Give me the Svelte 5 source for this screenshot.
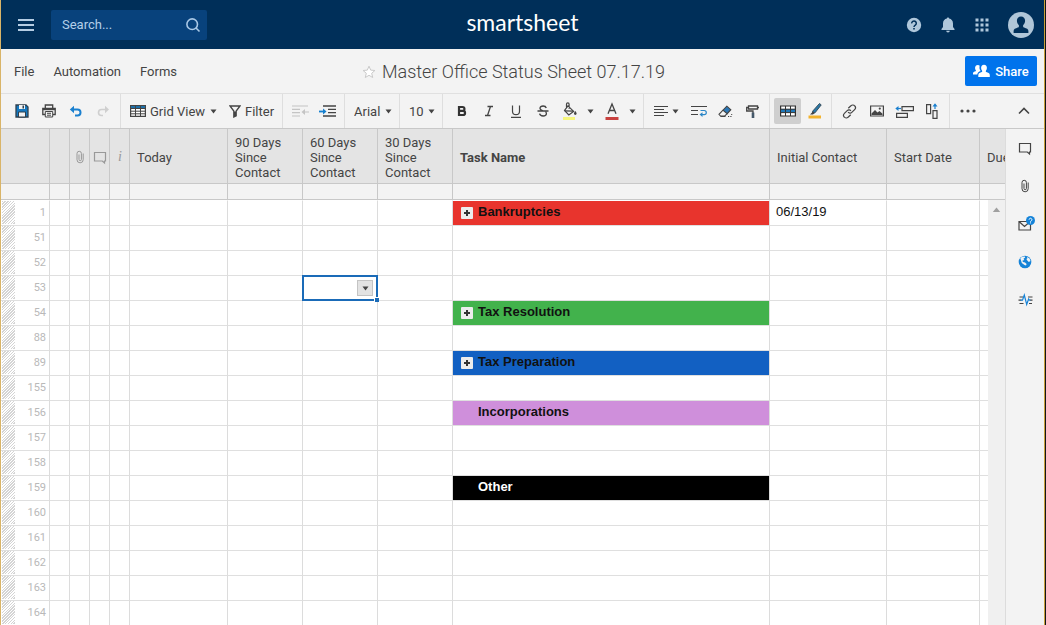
<script lang="ts">
  const numbers = [1, 51, 52, 53, 54, 88, 89, 155, 156, 157, 158, 159, 160, 161, 162, 163, 164];

  const tasks: Record<number, { name: string; tone: string; expandable?: boolean }> = {
    1: { name: 'Bankruptcies', tone: 'red', expandable: true },
    54: { name: 'Tax Resolution', tone: 'green', expandable: true },
    89: { name: 'Tax Preparation', tone: 'blue', expandable: true },
    156: { name: 'Incorporations', tone: 'violet' },
    159: { name: 'Other', tone: 'black' }
  };

  const contacts: Record<number, string> = { 1: '06/13/19' };
  const selectedRow = 53;

  let query = $state('');
</script>

{#snippet clip()}
  <svg width="16" height="16" viewBox="0 0 16 16" fill="none" stroke="currentColor" stroke-width="1">
    <path d="M11.200 4.500v6.200a3.100 3.100 0 0 1-6.200 0V4.500a2.200 2.200 0 0 1 4.400 0v6a1.200 1.200 0 0 1-2.400 0V5.500" />
  </svg>
{/snippet}

{#snippet bubble()}
  <svg width="16" height="16" viewBox="0 0 16 16" fill="none" stroke="currentColor" stroke-width="1.2">
    <path d="M2.500 3.500h11v8.500h-1v2l-2.200-2H2.500z" />
  </svg>
{/snippet}

{#snippet caret()}
  <svg width="7" height="5" viewBox="0 0 7 5"><path d="M.5.5h6l-3 4z" fill="#444" /></svg>
{/snippet}

<div class="app">
  <header class="top">
    <div class="top-left">
      <button class="plain" aria-label="Menu">
        <svg width="16" height="14" viewBox="0 0 16 14" fill="none" stroke="#b5cde3" stroke-width="2">
          <path d="M0 2h16M0 7h16M0 12h16" />
        </svg>
      </button>
      <form class="search" role="search" onsubmit={(e) => e.preventDefault()}>
        <input type="text" placeholder="Search..." aria-label="Search" bind:value={query} />
        <button class="plain" aria-label="Run search">
          <svg width="16" height="16" viewBox="0 0 16 16" fill="none" stroke="#a9c8e6" stroke-width="1.6">
            <circle cx="7.200" cy="7.200" r="5.300" /><path d="M11 11l3.500 3.500" />
          </svg>
        </button>
      </form>
    </div>
    <div class="logo">smartsheet</div>
    <div class="top-right">
      <button class="plain" aria-label="Help">
        <svg width="16" height="16" viewBox="0 0 16 16" fill="none">
          <circle cx="8" cy="8" r="7.200" fill="#afc7db" />
          <path d="M5.700 6.400a2.300 2.300 0 1 1 3.600 1.800c-.9.600-1.300.9-1.300 1.800" stroke="#002f59" stroke-width="1.500" />
          <path d="M7.200 11h1.600v1.600H7.200z" fill="#002f59" />
        </svg>
      </button>
      <button class="plain" aria-label="Notifications">
        <svg width="16" height="16" viewBox="0 0 16 16" fill="#afc7db">
          <path d="M8 .5c.7 0 1.100.5 1.100 1.100C11.500 2.100 13 4 13 6.400v3.500l1.500 2.100v1h-13v-1L3 9.900V6.400C3 4 4.500 2.100 6.900 1.600 6.900 1 7.300.5 8 .5zM6.200 13.800h3.600a1.800 1.800 0 0 1-3.600 0z" />
        </svg>
      </button>
      <button class="plain" aria-label="Apps">
        <svg width="14" height="14" viewBox="0 0 14 14" fill="#afc7db">
          <path d="M.5.5h3v3h-3zM5.500.5h3v3h-3zM10.500.5h3v3h-3zM.5 5.500h3v3h-3zM5.500 5.500h3v3h-3zM10.500 5.500h3v3h-3zM.5 10.500h3v3h-3zM5.500 10.500h3v3h-3zM10.500 10.500h3v3h-3z" />
        </svg>
      </button>
      <button class="plain avatar" aria-label="Account">
        <svg width="26" height="26" viewBox="0 0 26 26">
          <circle cx="13" cy="13" r="13" fill="#b0c6d8" />
          <path d="M13 4.500c2.500 0 4.100 1.800 4.100 4.300 0 1.800-.8 3.500-2 4.400v1.200c0 .6.4.9 1 1.100 2.500.8 4.300 1.700 4.300 3.500v2H5.600v-2c0-1.800 1.800-2.700 4.300-3.500.6-.2 1-.5 1-1.100v-1.200c-1.200-.9-2-2.600-2-4.400 0-2.500 1.600-4.300 4.100-4.300z" fill="#002f59" />
        </svg>
      </button>
    </div>
  </header>

  <div class="menubar">
    <nav>
      <button class="plain">File</button>
      <button class="plain">Automation</button>
      <button class="plain">Forms</button>
    </nav>
    <div class="title">
      <button class="plain" aria-label="Favorite">
        <svg width="14" height="14" viewBox="0 0 14 14" fill="#fff" stroke="#c9c9c9">
          <path d="M7 1.200l1.700 3.900 4.200.4-3.200 2.800 1 4.200L7 10.300l-3.700 2.200 1-4.200L1.100 5.500l4.200-.4z" />
        </svg>
      </button>
      <h1>Master Office Status Sheet 07.17.19</h1>
    </div>
    <div class="share-wrap">
      <button class="share">
        <svg width="17" height="14" viewBox="0 0 17 14" fill="#fff">
          <path d="M4.800 1c.9 0 1.500.3 1.900.8-.5 1.700-.3 3.700.9 5.200-1.700.8-3.100 1.500-3.300 3.500H0V9.300c0-1.200 1.300-1.600 2.600-2.100.4-.2.5-.6.200-1C1.500 4.300 1.900 1 4.800 1z" />
          <path d="M11 .8c2 0 3 1.500 2.900 3.300 0 1.100-.4 2-1 2.700-.3.500-.2 1 .3 1.200 1.800.7 3.600 1.200 3.600 3v2H5.300v-2c0-1.800 1.800-2.300 3.500-3 .5-.2.6-.7.300-1.200-.6-.7-1-1.600-1-2.700C8.100 2.300 9 .8 11 .8z" />
        </svg>
        Share
      </button>
    </div>
  </div>

  <div class="toolbar" role="toolbar" aria-label="Sheet tools">
    <div class="group first">
      <button class="tool" aria-label="Save">
        <svg width="14" height="14" viewBox="0 0 14 14">
          <path d="M1 1h10l2 2v10H1z" fill="#1478c0" stroke="#2f3f4c" stroke-width="1.300" />
          <path d="M4 1h6v4H4z" fill="#f3f3f3" /><path d="M7.500 1.500h1.500v3H7.500z" fill="#2f3f4c" />
          <path d="M3.500 8h7v5h-7z" fill="#f3f3f3" stroke="#2f3f4c" />
        </svg>
      </button>
      <button class="tool" aria-label="Print">
        <svg width="14" height="14" viewBox="0 0 14 14" fill="none" stroke="#444" stroke-width="1.300">
          <path d="M3.300 4V1h7.400v3M3 10.500H.8V4.500h12.400v6H11" /><path d="M.8 5.200h12.400" stroke-width="2" />
          <path d="M3.300 7.500h7.400V13H3.300zM5 9.300h4M5 11.200h4" stroke-width="1" />
        </svg>
      </button>
      <button class="tool" aria-label="Undo">
        <svg width="14" height="12" viewBox="0 0 14 12" fill="none" stroke="#1b80cf" stroke-width="2">
          <path d="M3.500 4.500h5a3 3 0 0 1 0 6H6" /><path d="M5 .8v7.400L.8 4.500z" fill="#1b80cf" stroke="none" />
        </svg>
      </button>
      <button class="tool" aria-label="Redo" disabled>
        <svg width="14" height="12" viewBox="0 0 14 12" fill="none" stroke="#cfcfcf" stroke-width="1.600">
          <path d="M11 4.500H5.500a3 3 0 0 0 0 6H7" /><path d="M9 .8v7.400l4-3.700z" fill="#cfcfcf" stroke="none" />
        </svg>
      </button>
    </div>

    <div class="group views">
      <label class="pick">
        <svg width="16" height="12" viewBox="0 0 16 12">
          <path d="M.6.6h14.800v10.800H.6z" fill="#fff" stroke="#444" stroke-width="1.200" />
          <path d="M1 1h14v2H1z" fill="#1d6fa8" />
          <path d="M0 3.500h16M0 6.200h16M0 8.800h16M5.500 0v12M10.500 0v12" stroke="#444" fill="none" />
        </svg>
        <select aria-label="View"><option>Grid View</option></select>
      </label>
      <button class="filter">
        <svg width="12" height="13" viewBox="0 0 12 13" fill="none" stroke="#444" stroke-width="1.300">
          <path d="M1 1h10L7.200 6v4.800L4.800 12V6z" /><path d="M6 6.500v4.500" stroke-width="2" />
        </svg>
        Filter
      </button>
    </div>

    <div class="group">
      <button class="tool" aria-label="Outdent" disabled>
        <svg width="17" height="12" viewBox="0 0 17 12" fill="none" stroke="#c4c4c4" stroke-width="1.200">
          <path d="M0 1h16M0 4.300h8M0 7.700h8M0 11h8M11 7h6" /><path d="M13 4v6L9.500 7z" fill="#c4c4c4" stroke="none" />
        </svg>
      </button>
      <button class="tool" aria-label="Indent">
        <svg width="17" height="12" viewBox="0 0 17 12" fill="none" stroke="#444" stroke-width="1.300">
          <path d="M4 1h13M9 4.300h8M9 7.700h8M4 11h13" /><path d="M0 6.500h5" stroke="#1580d0" stroke-width="1.800" />
          <path d="M4 3.500v6l3.500-3z" fill="#1580d0" stroke="none" />
        </svg>
      </button>
    </div>

    <div class="group font">
      <select aria-label="Font"><option>Arial</option></select>
    </div>
    <div class="group font">
      <select aria-label="Font size"><option>10</option></select>
    </div>

    <div class="group styles">
      <button class="tool" aria-label="Bold">
        <svg width="12" height="12" viewBox="0 0 12 12" fill="none" stroke="#333" stroke-width="2.200">
          <path d="M3 2h3.500a1.900 1.900 0 0 1 0 3.900H3zM3 5.900h4a2 2 0 0 1 0 4.100H3z" />
        </svg>
      </button>
      <button class="tool" aria-label="Italic">
        <svg width="12" height="12" viewBox="0 0 12 12" fill="none" stroke="#444" stroke-width="1.300">
          <path d="M4.500 1.500H10M2 10.500h5.500M7.500 1.500l-3 9" />
        </svg>
      </button>
      <button class="tool" aria-label="Underline">
        <svg width="12" height="13" viewBox="0 0 12 13" fill="none" stroke="#444" stroke-width="1.200">
          <path d="M2.500.5v5.700a3.500 3.500 0 0 0 7 0V.5M1 12.300h10" />
        </svg>
      </button>
      <button class="tool" aria-label="Strikethrough">
        <svg width="12" height="12" viewBox="0 0 12 12" fill="none" stroke="#444" stroke-width="1.300">
          <path d="M9.300 3C8.900 1.700 7.700 1 6.100 1 4.200 1 3 1.900 3 3.300 3 4.800 4.300 5.300 6 5.800M2.600 8.700C2.900 10.200 4.200 11 6.100 11c2 0 3.300-.9 3.300-2.500 0-.8-.3-1.400-.9-1.800M.5 6h11" />
        </svg>
      </button>
      <button class="tool" aria-label="Fill color">
        <svg width="14" height="18" viewBox="0 0 14 18" fill="none" stroke="#444" stroke-width="1.200">
          <path d="M0 15h12v3H0z" fill="#f6f67c" stroke="none" />
          <path d="M5 3.800l5.600 5.600-4.800 3.600L1.500 8.500zM3.500 6.500V2.200a1.300 1.300 0 0 1 2.600 0v4.500" />
          <path d="M1.800 8.800l8.400.4" /><path d="M12.300 9c.9 1.300 1.300 2 1.300 2.600a1.300 1.300 0 0 1-2.600 0c0-.6.400-1.300 1.300-2.600z" fill="#444" stroke="none" />
        </svg>
      </button>
      <button class="drop" aria-label="Choose fill color">{@render caret()}</button>
      <button class="tool" aria-label="Text color">
        <svg width="14" height="18" viewBox="0 0 14 18" fill="none" stroke="#444" stroke-width="1.300">
          <path d="M3 11.800L7 2l4 9.800M4.300 8.500h5.400" /><path d="M.5 15h13v3H.5z" fill="#c8413f" stroke="none" />
        </svg>
      </button>
      <button class="drop" aria-label="Choose text color">{@render caret()}</button>
    </div>

    <div class="group">
      <button class="align" aria-label="Alignment">
        <svg width="14" height="12" viewBox="0 0 14 12" stroke="#444" stroke-width="1.200">
          <path d="M0 1.500h14M0 4.500h10M0 7.500h14M0 10.500h10" />
        </svg>
        {@render caret()}
      </button>
      <button class="tool" aria-label="Wrap text">
        <svg width="16" height="12" viewBox="0 0 16 12" fill="none" stroke="#444" stroke-width="1.200">
          <path d="M0 1.500h16M0 5.500h7M0 9.500h7" />
          <path d="M9.500 5.500h3.700a2 2 0 0 1 0 4.200H10" stroke="#2a86c7" /><path d="M11.500 7.200v4.800L8.500 9.600z" fill="#2a86c7" stroke="none" />
        </svg>
      </button>
      <button class="tool" aria-label="Clear format">
        <svg width="15" height="13" viewBox="0 0 15 13" fill="none" stroke="#444" stroke-width="1.100">
          <path d="M8.800 1.200l4 3.500-3.600 4-4.200-3.500z" fill="#2a78b8" /><path d="M5 5.200L1 9.300 2.500 11h4.300l2.400-2.300" />
          <path d="M2.500 11.500h5M10 11.500h1.200M12.300 11.500h1.200M13.200 9.500h1" />
        </svg>
      </button>
      <button class="tool" aria-label="Format painter">
        <svg width="14" height="13" viewBox="0 0 14 13" fill="none" stroke="#444" stroke-width="1.300">
          <path d="M2.500 1h9v3h-9zM2.500 2.500H.7V6H7v2M11.500 2.500H13" /><path d="M5.700 7.500h2.600V13H5.700z" fill="#44586a" stroke="none" />
        </svg>
      </button>
    </div>

    <div class="group">
      <button class="tool pressed" aria-label="Conditional formatting" aria-pressed="true">
        <svg width="16" height="12" viewBox="0 0 16 12" fill="none">
          <path d="M.6 1h14.800v10H.6z" fill="#fff" stroke="#333" stroke-width="1.200" />
          <path d="M1 4h14v3.500H1z" fill="#2078b8" />
          <path d="M0 4.200h16M0 7.600h16M5.500 1v10M10.500 1v10" stroke="#333" />
        </svg>
      </button>
      <button class="tool" aria-label="Highlight changes">
        <svg width="14" height="16" viewBox="0 0 14 16">
          <path d="M.5 12.500h12.500v3H.5z" fill="#f3b32d" />
          <path d="M11.500.5l1.700 1.400L7 9.800 4.400 10.300 4.800 8z" fill="#2a78a8" stroke="#38505f" /><path d="M5 8.500L2 11.500h3l1.700-1.700z" fill="#444" />
        </svg>
      </button>
    </div>

    <div class="group">
      <button class="tool" aria-label="Link">
        <svg width="15" height="15" viewBox="0 0 15 15" fill="none" stroke="#444" stroke-width="1.200">
          <path d="M6.300 4.300l2.600-2.500a2.600 2.600 0 0 1 3.900.2 2.600 2.600 0 0 1-.2 3.600L9.800 8.400a2.500 2.500 0 0 1-3.700-.2" />
          <path d="M8.700 10.700l-2.600 2.500a2.600 2.600 0 0 1-3.900-.2 2.600 2.600 0 0 1 .2-3.600l2.800-2.800a2.500 2.500 0 0 1 3.700.2" />
        </svg>
      </button>
      <button class="tool" aria-label="Image">
        <svg width="14" height="12" viewBox="0 0 14 12">
          <path d="M.6 1h12.800v10H.6z" fill="none" stroke="#444" stroke-width="1.200" />
          <path d="M1.500 10V8.500L5 5l2.500 2.500L9.500 6l3 2.700V10z" fill="#444" /><circle cx="9.800" cy="3.600" r="1.100" fill="#444" />
        </svg>
      </button>
      <button class="tool wide" aria-label="Insert row">
        <svg width="19" height="13" viewBox="0 0 19 13" fill="none" stroke="#444" stroke-width="1.200">
          <path d="M7 1.600h11.400v4H7zM1.600 8.400h10.800v4H1.600z" />
          <path d="M1.500 3.500H6" stroke="#1b80cf" /><path d="M3.500 1v5L.3 3.500z" fill="#1b80cf" stroke="none" />
        </svg>
      </button>
      <button class="tool wide" aria-label="Insert column">
        <svg width="12" height="16" viewBox="0 0 12 16" fill="none" stroke="#444" stroke-width="1.200">
          <path d="M.6 1.600h4v9h-4zM7 7.600h4v7.800H7z" />
          <path d="M9 1.500V6" stroke="#1b80cf" /><path d="M6.500 3.500h5L9 .3z" fill="#1b80cf" stroke="none" />
        </svg>
      </button>
    </div>

    <div class="group last">
      <button class="tool" aria-label="More">
        <svg width="16" height="4" viewBox="0 0 16 4" fill="#444"><circle cx="2" cy="2" r="1.600" /><circle cx="8" cy="2" r="1.600" /><circle cx="14" cy="2" r="1.600" /></svg>
      </button>
      <button class="tool" aria-label="Collapse toolbar">
        <svg width="12" height="8" viewBox="0 0 12 8" fill="none" stroke="#444" stroke-width="1.600"><path d="M1 6.500l5-5 5 5" /></svg>
      </button>
    </div>
  </div>

  <main>
    <div class="sheet">
      <table>
        <colgroup>
          <col class="c-num" /><col class="c-tiny" /><col class="c-tiny" /><col class="c-tiny" /><col class="c-tiny" />
          <col class="c-today" /><col class="c-days" /><col class="c-days" /><col class="c-days" />
          <col class="c-task" /><col class="c-contact" /><col class="c-start" /><col />
        </colgroup>
        <thead>
          <tr class="names">
            <th></th>
            <th></th>
            <th class="glyph" aria-label="Attachments">{@render clip()}</th>
            <th class="glyph" aria-label="Comments">{@render bubble()}</th>
            <th class="glyph info">i</th>
            <th>Today</th>
            <th>90 Days Since Contact</th>
            <th>60 Days Since Contact</th>
            <th>30 Days Since Contact</th>
            <th class="primary">Task Name</th>
            <th>Initial Contact</th>
            <th>Start Date</th>
            <th class="cut">Due</th>
          </tr>
          <tr class="band">
            {#each Array(13) as _}<td></td>{/each}
          </tr>
        </thead>
        <tbody>
          {#each numbers as n}
            <tr>
              <th class="num" scope="row"><span class="grip"></span>{n}</th>
              <td></td><td></td><td></td><td></td><td></td><td></td>
              <td class="cell">
                {#if n === selectedRow}
                  <div class="selected">
                    <button aria-label="Open list">{@render caret()}</button>
                    <span class="handle"></span>
                  </div>
                {/if}
              </td>
              <td></td>
              {#if tasks[n]}
                <td class="task {tasks[n].tone}">
                  <div>
                    {#if tasks[n].expandable}
                      <button class="plus" aria-label="Expand {tasks[n].name}">
                        <svg width="12" height="12" viewBox="0 0 12 12"><path d="M3 6h6M6 3v6" stroke="#333" stroke-width="2" /></svg>
                      </button>
                    {:else}
                      <span class="no-plus"></span>
                    {/if}
                    {tasks[n].name}
                  </div>
                </td>
              {:else}
                <td></td>
              {/if}
              <td class="value">{contacts[n] ?? ''}</td>
              <td></td><td></td>
            </tr>
          {/each}
        </tbody>
      </table>
      <div class="scrollbar">
        <svg width="9" height="5" viewBox="0 0 9 5"><path d="M.8 5L4.500.5 8.200 5z" fill="#a0a0a0" /></svg>
      </div>
    </div>

    <aside>
      <button class="plain" aria-label="Conversations">{@render bubble()}</button>
      <button class="plain" aria-label="Attachments">{@render clip()}</button>
      <button class="plain" aria-label="Update requests">
        <svg width="20" height="16" viewBox="0 0 20 16" fill="none" stroke="#444" stroke-width="1.200">
          <path d="M4 5.500h11.500v8.500H4zM4 5.500l5.500 5 4-3.500" />
          <circle cx="15.500" cy="4.500" r="4.500" fill="#1583d8" stroke="none" />
          <path d="M14.100 3.700a1.400 1.400 0 1 1 2.200 1.100c-.6.400-.8.600-.8 1.100M15.500 6.400v1" stroke="#fff" stroke-width="1" />
        </svg>
      </button>
      <button class="plain" aria-label="Publish">
        <svg width="14" height="14" viewBox="0 0 14 14">
          <circle cx="7" cy="7" r="6.300" fill="#1583d8" />
          <path d="M2.300 3.200L4 1.800l2.800-.4.4 1.200-1.700 1.200.8 1.300-2 .6.700 1.400 2 .3 1.600 1.600-.6 1.400-1.500-.3L3.800 8zM8.800 1.800l2.800 1.800.9 2.500-1.700.9-1.500-1.400-.9-1.600 1.100-.8z" fill="#f3f3f3" />
        </svg>
      </button>
      <button class="plain" aria-label="Activity log">
        <svg width="15" height="14" viewBox="0 0 15 14" fill="none" stroke="#444" stroke-width="1.200">
          <path d="M1.500 4h3.500M10 4h4.500M.500 7.200h3M12 7.200h2.500M1.500 10.500h4M11 10.500h3" />
          <path d="M2.500 7.200h2L6.300 2l2.400 9.500L10.600 6l.8 1.200h1" stroke="#1583d8" />
        </svg>
      </button>
    </aside>
  </main>
</div>

<style>
  :global(body) {
    margin: 0;
    background: #151515;
  }
  .app {
    box-sizing: border-box;
    height: 100vh;
    margin-right: 1px;
    border-left: 1px solid #d9b468;
    border-right: 1px solid #c9a03c;
    display: flex;
    flex-direction: column;
    overflow: hidden;
    background: #f3f3f3;
    color: #444;
    font: 13px/15px Roboto, sans-serif;
  }
  button,
  select,
  input {
    margin: 0;
    padding: 0;
    border: 0;
    background: none;
    color: inherit;
    font: inherit;
  }
  button {
    display: flex;
    align-items: center;
    justify-content: center;
  }
  svg {
    display: block;
    flex: none;
  }

  .top {
    display: grid;
    grid-template-columns: 1fr auto 1fr;
    align-items: center;
    height: 49px;
    flex: none;
    background: #002f59;
  }
  .top-left {
    display: flex;
    align-items: center;
    gap: 17px;
    padding-left: 17px;
  }
  .search {
    display: flex;
    align-items: center;
    box-sizing: border-box;
    width: 156px;
    height: 30px;
    padding: 0 6px 0 11px;
    background: #08427c;
    border-radius: 2px;
  }
  .search input {
    flex: 1;
    min-width: 0;
    color: #fff;
    outline: none;
  }
  .search input::placeholder {
    color: #b4cfe9;
    opacity: 1;
  }
  .logo {
    padding-bottom: 5px;
    color: #fff;
    font: 23px/28px Lato, sans-serif;
  }
  .top-right {
    display: flex;
    align-items: center;
    justify-content: flex-end;
    padding-right: 10px;
  }
  .top-right .plain {
    width: 34px;
    height: 34px;
  }
  .top-right .avatar {
    width: 26px;
    margin-left: 9px;
  }

  .menubar {
    display: grid;
    grid-template-columns: 1fr auto 1fr;
    align-items: center;
    height: 44px;
    flex: none;
  }
  nav {
    display: flex;
    gap: 19px;
    padding-left: 13px;
  }
  .title {
    display: flex;
    align-items: center;
    gap: 6px;
    padding: 2px 18px 0 0;
  }
  h1 {
    margin: 0;
    font: 300 18px/24px Roboto, sans-serif;
  }
  .share-wrap {
    display: flex;
    justify-content: flex-end;
    padding-right: 7px;
  }
  .share {
    gap: 5px;
    width: 72px;
    height: 30px;
    border-radius: 2px;
    background: #0073ec;
    color: #fff;
    font-weight: 500;
  }

  .toolbar {
    display: flex;
    height: 34px;
    flex: none;
    border-top: 1px solid #e0e0e0;
    border-bottom: 1px solid #c8c8c8;
  }
  .group {
    display: flex;
    align-items: center;
    padding: 0 3px 0 4px;
    border-right: 1px solid #dedede;
  }
  .group.first {
    padding: 0 4px 0 7px;
  }
  .group.styles {
    padding: 0 3px 0 5px;
  }
  .group.last {
    flex: 1;
    justify-content: space-between;
    padding-right: 7px;
    border-right: 0;
  }
  .tool {
    width: 27px;
    height: 26px;
  }
  .tool.wide {
    width: 28px;
  }
  .tool.pressed {
    background: #cfcfcf;
    border-radius: 2px;
  }
  .drop {
    width: 15px;
    height: 26px;
  }
  .align {
    gap: 4px;
    width: 37px;
    height: 26px;
  }
  .views {
    gap: 12px;
    padding: 0 8px 0 9px;
  }
  .pick,
  .filter {
    display: flex;
    align-items: center;
    gap: 4px;
  }
  .font {
    padding: 0 7px 0 9px;
  }
  select {
    appearance: none;
    padding-right: 11px;
    background: url("data:image/svg+xml,%3Csvg xmlns='http://www.w3.org/2000/svg' width='7' height='5'%3E%3Cpath d='M.5.5h6l-3 4z' fill='%23444'/%3E%3C/svg%3E") no-repeat right center;
    outline: none;
  }

  main {
    display: flex;
    flex: 1;
    min-height: 0;
  }
  .sheet {
    position: relative;
    flex: 1;
    min-width: 0;
    overflow: hidden;
    background: #fff;
    border-right: 1px solid #dcdcdc;
  }
  table {
    width: 100%;
    table-layout: fixed;
    border-collapse: separate;
    border-spacing: 0;
  }
  .c-num { width: 49px; }
  .c-tiny { width: 20px; }
  .c-today { width: 98px; }
  .c-days { width: 75px; }
  .c-task { width: 317px; }
  .c-contact { width: 117px; }
  .c-start { width: 93px; }
  th,
  td {
    box-sizing: border-box;
    height: 25px;
    padding: 0;
    border-right: 1px solid #dcdcdc;
    border-bottom: 1px solid #dfdfdf;
    font-weight: 400;
    text-align: left;
  }
  th:last-child,
  td:last-child {
    border-right: 0;
  }
  .names th {
    height: 55px;
    padding: 3px 7px 0;
    border-color: #c8c8c8;
    background: #e4e4e4;
  }
  .names .glyph {
    padding: 1px 0 0 2px;
    color: #999;
  }
  .names .info {
    padding-left: 8px;
    font: italic 14px/15px "Liberation Serif", serif;
  }
  .names .primary {
    font-weight: 700;
  }
  .names .cut {
    padding-right: 0;
    white-space: nowrap;
    overflow: hidden;
  }
  .band td {
    height: 16px;
    border-color: #c8c8c8;
    background: #f3f3f3;
  }
  tbody tr:first-child > * {
    height: 26px;
    border-top: 1px solid #fff;
  }
  .num {
    position: relative;
    padding: 0 3px 2px 0;
    color: #b9b9b9;
    font-size: 11px;
    text-align: right;
  }
  .grip {
    position: absolute;
    left: 1px;
    top: 0;
    bottom: 1px;
    width: 13px;
    background: repeating-linear-gradient(135deg, #d4d4d4 0 1px, #fff 1px 2px);
  }
  .cell {
    position: relative;
  }
  .selected {
    position: absolute;
    inset: -1px -1px -1px -1px;
    display: flex;
    align-items: center;
    justify-content: flex-end;
    padding-right: 3px;
    border: 2px solid #1a6bb8;
    background: #fff;
    z-index: 1;
  }
  .selected button {
    width: 16px;
    height: 16px;
    border: 1px solid #c4c4c4;
    background: #e3e3e3;
  }
  .handle {
    position: absolute;
    right: -3px;
    bottom: -3px;
    width: 4px;
    height: 4px;
    border: 1px solid #fff;
    border-width: 1px 0 0 1px;
    background: #1a6bb8;
  }
  .task,
  .value {
    padding-bottom: 4px;
    color: #111;
    font: 13px/15px "Liberation Sans", Arial, sans-serif;
  }
  .value {
    padding-left: 6px;
  }
  .task {
    padding-left: 8px;
    font-weight: 700;
  }
  .task div {
    display: flex;
    align-items: flex-end;
    gap: 5px;
  }
  .plus,
  .no-plus {
    width: 12px;
    height: 12px;
  }
  .plus {
    background: #ececec;
    border-radius: 1px;
  }
  .red { background: #e8342d; }
  .green { background: #42b24c; }
  .blue { background: #1260c2; }
  .violet { background: #cf8fdb; }
  .black {
    background: #000;
    color: #fff;
  }
  .scrollbar {
    position: absolute;
    top: 71px;
    right: 0;
    bottom: 0;
    width: 17px;
    display: flex;
    justify-content: center;
    padding-top: 7px;
    box-sizing: border-box;
    background: #f0f0f0;
  }

  aside {
    display: flex;
    flex-direction: column;
    flex: none;
    width: 38px;
  }
  aside .plain {
    height: 38px;
  }
</style>
